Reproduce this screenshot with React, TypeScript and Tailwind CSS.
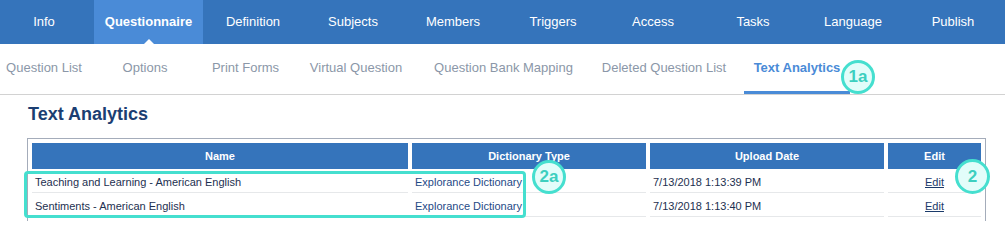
import React from 'react';

const navItems = [
  { label: 'Info', w: 'w-[94px] pr-[6px]' },
  { label: 'Questionnaire', w: 'w-[109px]', active: true },
  { label: 'Definition', w: 'w-[100px]' },
  { label: 'Subjects', w: 'w-[100px]' },
  { label: 'Members', w: 'w-[100px]' },
  { label: 'Triggers', w: 'w-[100px]' },
  { label: 'Access', w: 'w-[100px]' },
  { label: 'Tasks', w: 'w-[100px]' },
  { label: 'Language', w: 'w-[100px]' },
  { label: 'Publish', w: 'w-[100px]' },
];

const subTabs = [
  { label: 'Question List', w: 'w-[88px]' },
  { label: 'Options', w: 'w-[114px]' },
  { label: 'Print Forms', w: 'w-[87px]' },
  { label: 'Virtual Question', w: 'w-[134px]' },
  { label: 'Question Bank Mapping', w: 'w-[161px]' },
  { label: 'Deleted Question List', w: 'w-[160px]' },
  { label: 'Text Analytics', w: 'w-[106px]', active: true },
];

const rows = [
  { name: 'Teaching and Learning - American English', type: 'Explorance Dictionary', date: '7/13/2018 1:13:39 PM' },
  { name: 'Sentiments - American English', type: 'Explorance Dictionary', date: '7/13/2018 1:13:40 PM' },
];

const Badge: React.FC<{ text: string; className: string }> = ({ text, className }) => (
  <div
    className={`absolute flex items-center justify-center rounded-full border-[3px] border-[#45dfcf] bg-[#e2fdfa] text-[17px] font-bold text-[#3ccfbf] ${className}`}
  >
    {text}
  </div>
);

const App: React.FC = () => {
  return (
    <div className="relative w-[1005px] h-[233px] overflow-hidden bg-white font-['Liberation_Sans',Arial,sans-serif]">
      {/* top nav */}
      <div className="flex h-[44px] bg-[#3574bb] text-[13px] text-white">
        {navItems.map((item) => (
          <div
            key={item.label}
            className={`relative flex items-center justify-center ${item.w} ${item.active ? 'bg-[#4a8bd7] font-bold' : ''}`}
          >
            {item.label}
            {item.active && (
              <span className="absolute bottom-0 left-1/2 -translate-x-1/2 w-0 h-0 border-x-[5px] border-x-transparent border-b-[5px] border-b-white" />
            )}
          </div>
        ))}
      </div>

      {/* sub tabs */}
      <div className="flex h-[51px] border-b border-[#d2d2d2] text-[13px]">
        {subTabs.map((tab) => (
          <div
            key={tab.label}
            className={`flex items-center justify-center h-[50px] border-b-[3px] ${tab.w} ${
              tab.active ? 'border-[#4a8bd7] font-bold text-[#4a8bd7]' : 'border-transparent text-[#8b97a8]'
            }`}
          >
            {tab.label}
          </div>
        ))}
      </div>

      <div className="pl-[28px] pt-[9px]">
        <h1 className="text-[18px] leading-[20px] font-bold text-[#1b3e72]">Text Analytics</h1>
      </div>

      <div className="ml-[27px] mt-[14px] w-[959px] border-x border-t border-[#a4acba]">
        <table className="w-full border-separate border-spacing-[4px] text-[11px]">
          <thead>
            <tr className="h-[26px] bg-[#3574bb] text-white font-bold">
              <th className="w-[376px] bg-[#3574bb] font-bold">Name</th>
              <th className="w-[234px] bg-[#3574bb] font-bold">Dictionary Type</th>
              <th className="w-[234px] bg-[#3574bb] font-bold">Upload Date</th>
              <th className="w-[93px] bg-[#3574bb] font-bold">Edit</th>
            </tr>
          </thead>
          <tbody>
            {rows.map((r) => (
              <tr key={r.date} className="h-[20px]">
                <td className="pl-[3px] border-b border-[#e6e8ea] text-[#1d3050]">{r.name}</td>
                <td className="pl-[3px] border-b border-[#e6e8ea] text-[#1f4a86]">{r.type}</td>
                <td className="pl-[3px] border-b border-[#e6e8ea] text-[#1d3050]">{r.date}</td>
                <td className="text-center border-b border-[#e6e8ea]">
                  <a href="#" className="underline text-[#1a3a6a]">
                    Edit
                  </a>
                </td>
              </tr>
            ))}
          </tbody>
        </table>
      </div>

      {/* annotations */}
      <div className="absolute left-[24px] top-[171px] w-[502px] h-[47px] rounded-[4px] border-[3px] border-[#45dfcf]" />
      <Badge text="1a" className="left-[841px] top-[60px] w-[34px] h-[34px]" />
      <Badge text="2a" className="left-[532px] top-[160px] w-[34px] h-[34px]" />
      <Badge text="2" className="left-[955px] top-[159px] w-[35px] h-[35px]" />
    </div>
  );
};

export default App;
